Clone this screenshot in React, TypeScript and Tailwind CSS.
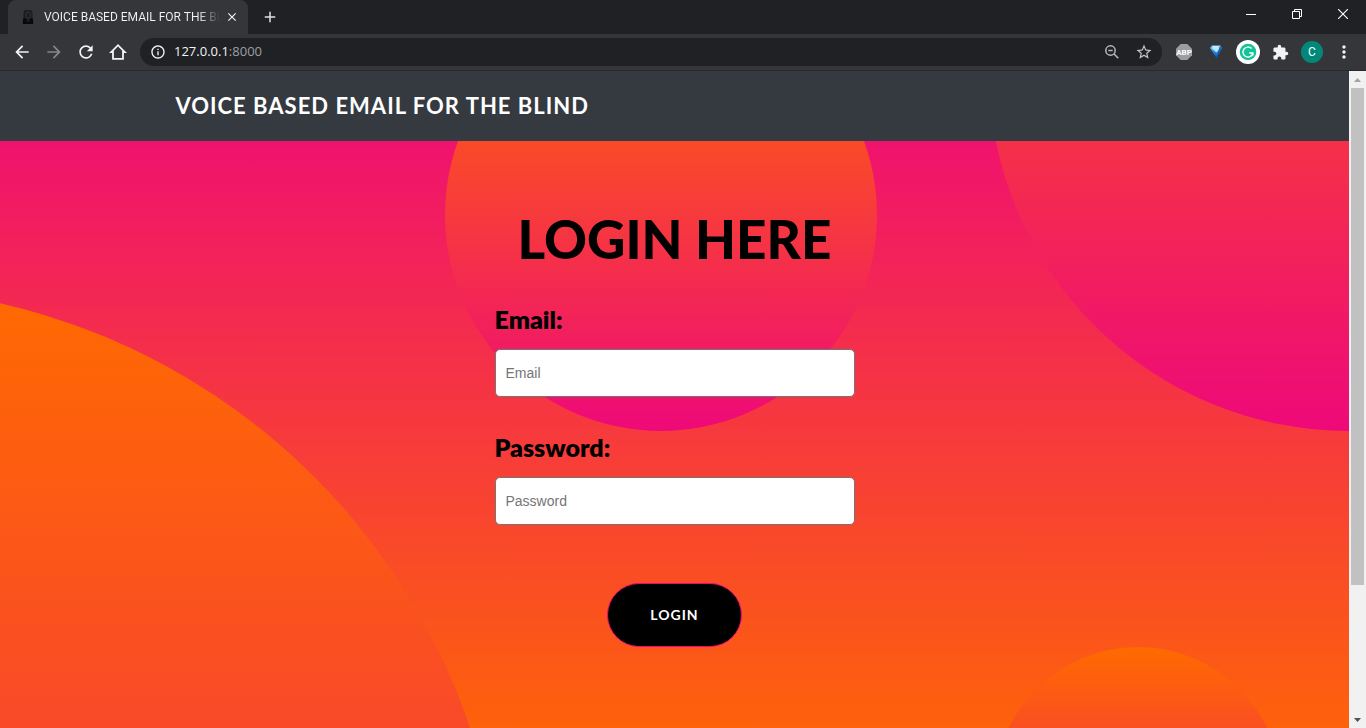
import type { ReactNode } from "react";
import {
  MdAdd,
  MdArrowBack,
  MdArrowForward,
  MdClose,
  MdExtension,
  MdMoreVert,
  MdOutlineInfo,
  MdRefresh,
  MdStarBorder,
} from "react-icons/md";

function ToolButton({ label, children }: { label: string; children: ReactNode }) {
  return (
    <button type="button" aria-label={label} className="flex h-7 w-8 shrink-0 items-center justify-center">
      {children}
    </button>
  );
}

function Favicon() {
  return (
    <svg className="size-4 shrink-0" viewBox="0 0 16 16" aria-hidden="true">
      <rect x="3.5" y="1" width="9" height="12" rx="3" fill="#1b1c1e" />
      <path d="M3 9.500h10l.3 5.500H2.700z" fill="#08090a" />
      <rect x="6" y="3" width="4.400" height="6.600" rx="2.200" fill="none" stroke="#3b3c3f" strokeWidth="0.9" />
      <path d="M8.200 9.600v2M6.400 12h3.600" stroke="#303134" strokeWidth="0.9" />
    </svg>
  );
}

function TabStrip() {
  return (
    <div className="flex h-[34px] shrink-0 items-stretch bg-[#202124] pl-2">
      <div className="flex w-60 items-center rounded-t-lg bg-[#35363a] pl-3 pr-2">
        <Favicon />
        <span className="ml-2 min-w-0 flex-1 overflow-hidden whitespace-nowrap bg-linear-to-r from-[#f1f3f4] from-88% to-[#35363a] bg-clip-text font-['Roboto','Open_Sans',sans-serif] text-xs text-transparent">
          VOICE BASED EMAIL FOR THE BLIND
        </span>
        <button type="button" aria-label="Close tab" className="ml-1 flex size-4 items-center justify-center text-[#f1f3f4]">
          <MdClose className="size-[14px]" />
        </button>
      </div>
      <button type="button" aria-label="New tab" className="ml-3 flex w-5 items-center justify-center text-[#dfe1e5]">
        <MdAdd className="size-[18px]" />
      </button>
      <div className="ml-auto flex h-7 text-white">
        <button type="button" aria-label="Minimize" className="flex w-[46px] items-center justify-center">
          <svg className="size-[10px]" viewBox="0 0 10 10" stroke="currentColor" fill="none">
            <path d="M0 5.5h10" />
          </svg>
        </button>
        <button type="button" aria-label="Restore" className="flex w-[46px] items-center justify-center">
          <svg className="size-[10px]" viewBox="0 0 10 10" stroke="currentColor" fill="none">
            <path d="M.5 2.5h7v7h-7zM2.5 2.5v-2h7v7h-2" />
          </svg>
        </button>
        <button type="button" aria-label="Close" className="flex w-[46px] items-center justify-center">
          <svg className="size-[10px]" viewBox="0 0 10 10" stroke="currentColor" fill="none">
            <path d="M0 0l10 10M10 0L0 10" strokeWidth="1.1" />
          </svg>
        </button>
      </div>
    </div>
  );
}

function Toolbar() {
  return (
    <div className="flex h-[37px] shrink-0 items-center border-b border-[#28292c] bg-[#35363a] px-[6px] text-[#f1f3f4]">
      <ToolButton label="Back">
        <MdArrowBack className="size-5" />
      </ToolButton>
      <ToolButton label="Forward">
        <MdArrowForward className="size-5 text-[#86878a]" />
      </ToolButton>
      <ToolButton label="Reload">
        <MdRefresh className="size-5" />
      </ToolButton>
      <ToolButton label="Home">
        <svg className="size-5" viewBox="0 0 20 20" fill="none" stroke="currentColor" strokeWidth="1.8">
          <path d="M5 10H3.200L10 3.200l6.800 6.800H15v6.800H5z" />
        </svg>
      </ToolButton>
      <div className="mx-[6px] flex h-7 min-w-0 flex-1 items-center rounded-full bg-[#202124] pl-[10px] pr-[2px]">
        <MdOutlineInfo className="size-4 shrink-0" />
        <div className="ml-2 min-w-0 flex-1 text-[13px] text-[#f1f3f4]">
          127.0.0.1<span className="text-[#9aa0a6]">:8000</span>
        </div>
        <ToolButton label="Zoom">
          <svg className="size-4 text-[#b4b7bb]" viewBox="0 0 16 16" fill="none" stroke="currentColor" strokeWidth="1.5">
            <circle cx="6.500" cy="6.500" r="4.700" />
            <path d="M4.300 6.500h4.400M10 10l4.300 4.300" />
          </svg>
        </ToolButton>
        <ToolButton label="Bookmark this page">
          <MdStarBorder className="size-[18px] text-[#c4c7ca]" />
        </ToolButton>
      </div>
      <ToolButton label="Adblock Plus">
        <svg className="size-4" viewBox="0 0 16 16">
          <path d="M4.7 0h6.6L16 4.7v6.6L11.3 16H4.7L0 11.3V4.7z" fill="#9c9d9f" />
          <text x="8" y="11" textAnchor="middle" fontFamily="Roboto, sans-serif" fontWeight="700" fontSize="8" fill="#fff">
            ABP
          </text>
        </svg>
      </ToolButton>
      <ToolButton label="Gem extension">
        <svg className="size-4" viewBox="0 0 16 16">
          <defs>
            <linearGradient id="gem" x1="0" x2="0" y1="0" y2="1">
              <stop offset="0" stopColor="#8fd0fb" />
              <stop offset="0.5" stopColor="#1b8be6" />
              <stop offset="1" stopColor="#0a4fae" />
            </linearGradient>
          </defs>
          <path d="M4 1.500h8.500L14 4 8.500 14 2 4z" fill="url(#gem)" />
          <path d="M5 2h5.500l.5 3-2.500 3.500L4 4.500z" fill="#d3effd" opacity="0.85" />
          <path d="M12.500 1.500L14 4 8.500 14l2.500-9z" fill="#0a4fae" opacity="0.8" />
        </svg>
      </ToolButton>
      <ToolButton label="Grammarly">
        <svg className="size-6" viewBox="0 0 24 24">
          <circle cx="12" cy="12" r="12" fill="#fff" />
          <circle cx="12" cy="12" r="8.3" fill="#15c39a" />
          <path d="M15.6 8.6A5 5 0 1 0 16.9 13h-3.6M16.9 12.6v3" fill="none" stroke="#fff" strokeWidth="1.4" />
        </svg>
      </ToolButton>
      <ToolButton label="Extensions">
        <MdExtension className="size-[17px]" />
      </ToolButton>
      <ToolButton label="Profile">
        <span className="flex size-[22px] items-center justify-center rounded-full bg-[#00897b] font-['Roboto',sans-serif] text-xs text-white">
          C
        </span>
      </ToolButton>
      <ToolButton label="Menu">
        <MdMoreVert className="size-5" />
      </ToolButton>
    </div>
  );
}

function Scrollbar() {
  return (
    <div className="flex w-[17px] shrink-0 flex-col items-center bg-[#f1f1f1]" aria-hidden="true">
      <svg className="h-[17px] w-[17px] shrink-0" viewBox="0 0 17 17">
        <path d="M5 11h7L8.500 7z" fill="#a3a3a3" />
      </svg>
      <div className="min-h-0 w-[13px] flex-[497] bg-[#c1c1c1]" />
      <div className="min-h-0 flex-[126]" />
      <svg className="h-[17px] w-[17px] shrink-0" viewBox="0 0 17 17">
        <path d="M5 7h7l-3.500 4z" fill="#505050" />
      </svg>
    </div>
  );
}

const circle = "absolute rounded-full bg-linear-to-t/srgb from-[#ee0979] to-[#ff6a00]";

function Field({ id, label, type }: { id: string; label: string; type: string }) {
  return (
    <div className="mb-8 flex flex-col">
      <label htmlFor={id} className="mb-3 text-[25px] leading-9 font-extrabold text-black">
        {label}:
      </label>
      <input
        id={id}
        type={type}
        placeholder={label}
        className="h-12 w-full rounded-[5px] border border-[#767676] bg-white px-[10px] font-['Liberation_Sans',Arial,sans-serif] text-sm text-black placeholder:text-[#757575]"
      />
    </div>
  );
}

function LoginPage() {
  return (
    <div className="min-w-0 flex-1 overflow-hidden font-['Lato',sans-serif]">
      <nav className="relative z-10 flex h-[70px] items-center bg-[#343a40] pb-[2px]">
        <div className="mx-auto w-full max-w-[1026px] px-[14px]">
          <a href="#top" className="text-[22px] font-bold tracking-[1px] text-white">
            VOICE BASED EMAIL FOR THE BLIND
          </a>
        </div>
      </nav>
      <header
        id="top"
        className="relative -mt-[70px] overflow-hidden bg-linear-to-t/srgb from-[#ff6a00] to-[#ee0979] pt-[134px] pb-36"
      >
        <div className={`${circle} -bottom-[792px] -left-[792px] size-[1296px]`} />
        <div className={`${circle} -top-[360px] -right-[360px] size-[720px]`} />
        <div className={`${circle} -bottom-36 right-[5%] size-72`} />
        <div className={`${circle} -top-[72px] right-[35%] size-[432px]`} />
        <form className="relative mx-auto flex w-[360px] flex-col" onSubmit={(e) => e.preventDefault()}>
          <h1 className="mb-7 text-center text-[53px] leading-[68px] font-black whitespace-nowrap text-black">
            LOGIN HERE
          </h1>
          <Field id="email" label="Email" type="email" />
          <Field id="password" label="Password" type="password" />
          <button
            type="submit"
            className="mt-[26px] h-16 w-[135px] self-center rounded-full border border-[#ee0979] bg-black text-sm font-bold tracking-[1px] text-white"
          >
            LOGIN
          </button>
        </form>
      </header>
    </div>
  );
}

export default function App() {
  return (
    <div className="flex h-screen flex-col overflow-hidden font-['Open_Sans','Noto_Sans',sans-serif]">
      <TabStrip />
      <Toolbar />
      <div className="flex min-h-0 flex-1">
        <LoginPage />
        <Scrollbar />
      </div>
    </div>
  );
}
